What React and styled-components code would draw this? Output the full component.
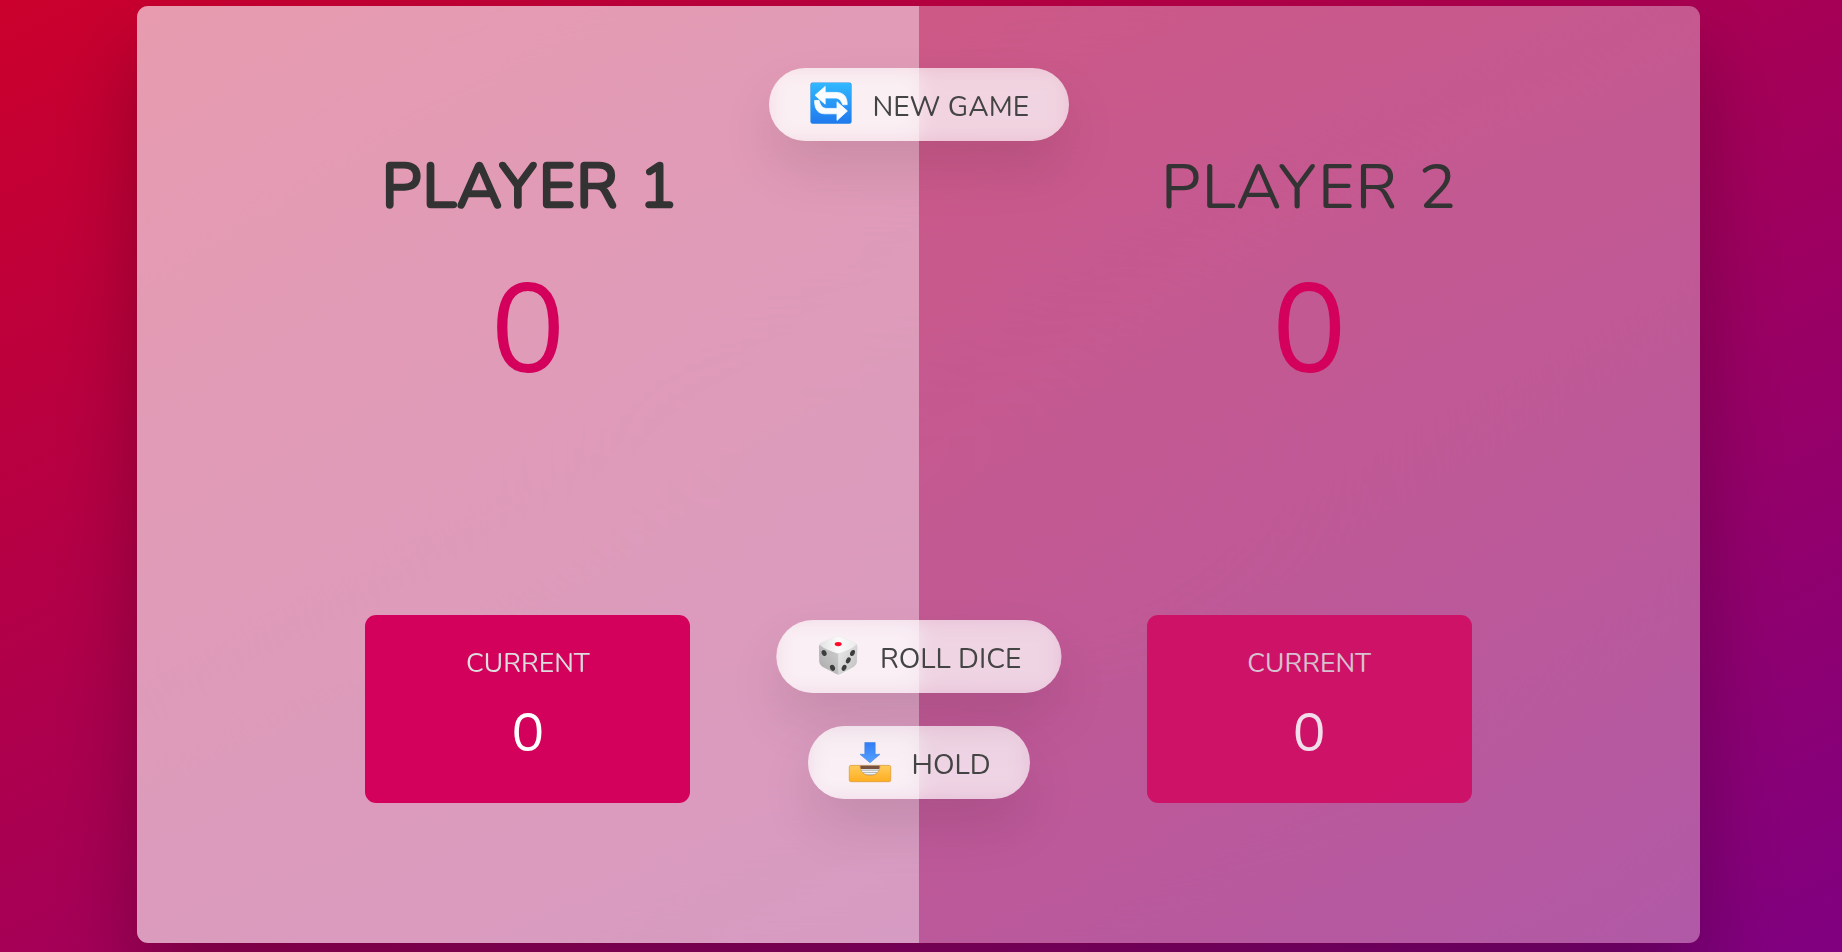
import React, { useState } from 'react';
import styled, { createGlobalStyle, css } from 'styled-components';

const GlobalStyle = createGlobalStyle`
  *, *::before, *::after { box-sizing: border-box; margin: 0; padding: 0; }
  html { font-size: 15.625px; }
  body {
    font-family: Nunito, Lato, sans-serif;
    font-weight: 400;
    height: 100vh;
    color: #333;
    background-image: linear-gradient(to top left, #800080 0%, #cb002c 100%);
    overflow: hidden;
  }
`;

const Page = styled.div`
  height: 949px;
  display: flex;
  align-items: center;
  justify-content: center;
  padding-right: 5px;
`;

const Board = styled.main`
  position: relative;
  width: 100rem;
  height: 60rem;
  display: flex;
  overflow: hidden;
  border-radius: 11.25px;
  background-color: rgba(255, 255, 255, 0.35);
  backdrop-filter: blur(300px);
  box-shadow: 0 3rem 5rem rgba(0, 0, 0, 0.25);
`;

const PlayerPanel = styled.section`
  flex: 50%;
  padding: 9rem;
  display: flex;
  flex-direction: column;
  align-items: center;
  ${({ $active }) => $active && css`background-color: rgba(255, 255, 255, 0.4);`}
`;

const Name = styled.h2`
  font-size: 4rem;
  line-height: 83px;
  font-weight: 400;
  letter-spacing: 1.25px;
  word-spacing: 2.5px;
  text-transform: uppercase;
  white-space: nowrap;
  margin-bottom: 1rem;
  ${({ $active }) => $active && css`
    -webkit-text-stroke: 2.6px #333;
    transform: translate(2px, -1.5px);
  `}
`;

const Score = styled.p`
  font-size: 8rem;
  line-height: 170px;
  color: #d3005c;
  margin-bottom: auto;
`;

const Current = styled.div`
  width: 65%;
  padding: 2rem;
  border-radius: 11.25px;
  background-color: #d3005c;
  color: #fff;
  text-align: center;
  opacity: ${({ $active }) => ($active ? 1 : 0.8)};
`;

const CurrentLabel = styled.p`
  font-size: 1.7rem;
  line-height: 34px;
  text-transform: uppercase;
  color: #ddd;
  margin-bottom: 1rem;
`;

const CurrentScore = styled.p`
  font-size: 3.5rem;
  line-height: 75.5px;
`;

const Button = styled.button`
  position: absolute;
  left: 50%;
  top: ${({ $top }) => $top}rem;
  width: ${({ $width }) => $width}px;
  height: 73px;
  transform: translateX(-50%);
  display: flex;
  align-items: center;
  gap: 19px;
  padding: 0 2.5rem;
  border: none;
  border-radius: 50rem;
  color: #444;
  font-family: inherit;
  font-size: 1.8rem;
  text-transform: uppercase;
  white-space: nowrap;
  cursor: pointer;
  background-color: rgba(255, 255, 255, 0.6);
  backdrop-filter: blur(10px);
  box-shadow: 0 1.75rem 3.5rem rgba(0, 0, 0, 0.1);
`;

const ButtonLabel = styled.span`
  padding-top: 5px;
`;

const Icon = styled.svg`
  width: 46px;
  height: 46px;
  flex: none;
`;

function RestartIcon() {
  return (
    <Icon viewBox="0 0 46 46">
      <defs>
        <linearGradient id="restart-bg" x1="0" y1="0" x2="0" y2="1">
          <stop offset="0" stopColor="#31b8ff" />
          <stop offset="1" stopColor="#2079ee" />
        </linearGradient>
      </defs>
      <rect x="2.4" y="0.6" width="41.2" height="41.2" rx="2.2" fill="#2a8fe0" />
      <rect x="2.9" y="1.1" width="40.2" height="40.2" rx="1.8" fill="url(#restart-bg)" />
      <g fill="#fafcff" stroke="#fafcff" strokeWidth="0.8" strokeLinejoin="round">
        <path d="M7 13.3 17.2 4.4V10.4H28C35.5 10.4 39.2 14.5 39.2 22.6L34.8 22.8C33.2 18.5 31 16 27 16H17.2V22.2Z" />
        <path d="M39.4 29 29 38.4V31.8H17C10 31.8 6.6 27.5 6.6 18.6L11 18.3C12.2 23.5 14.5 26.4 18.5 26.4H29V19.8Z" />
      </g>
    </Icon>
  );
}

function DiceIcon() {
  return (
    <Icon viewBox="-1.6 0.4 46 46">
      <defs>
        <linearGradient id="dice-top" x1="0" y1="0" x2="1" y2="0">
          <stop offset="0" stopColor="#e3e3e3" />
          <stop offset="0.5" stopColor="#fafafa" />
          <stop offset="1" stopColor="#ececec" />
        </linearGradient>
        <linearGradient id="dice-left" x1="0" y1="1" x2="1" y2="0">
          <stop offset="0" stopColor="#a9a9a9" />
          <stop offset="1" stopColor="#cfcfcf" />
        </linearGradient>
        <linearGradient id="dice-right" x1="0" y1="0" x2="1" y2="1">
          <stop offset="0" stopColor="#eeeeee" />
          <stop offset="1" stopColor="#bcbcbc" />
        </linearGradient>
      </defs>
      <path d="M18.5 4.1Q21 3 23.5 4.1L37.4 9.8Q40.3 11.2 40.2 14.2L39.8 29Q39.6 32.2 37 33.9L23.8 41.2Q21.3 42.5 18.8 41.2L5 33.8Q2.4 32.3 2.2 29.2L1.8 14.2Q1.8 11.2 4.6 9.8Z" fill="#d6d6d6" />
      <path d="M3 11.8Q3.4 10.5 5 9.7L18.5 4.1Q21 3 23.5 4.1L37.2 9.7Q38.6 10.4 39.2 11.8Q37 14.5 31 17.5Q24 20.8 21.2 20.8T11 17.5Q5 14.5 3 11.8Z" fill="url(#dice-top)" />
      <path d="M2.6 12.3Q5 14.6 11 17.5Q18 20.4 20 20.8Q21.2 21.5 21.2 24V42Q20 42 18.8 41.2L5 33.8Q2.4 32.3 2.2 29.2L1.8 14.2Q1.9 13 2.6 12.3Z" fill="url(#dice-left)" />
      <path d="M39.4 12.3Q37 14.6 31 17.5Q24 20.4 22.4 20.8Q21.2 21.5 21.2 24V42Q22.4 42 23.8 41.2L37 33.9Q39.6 32.2 39.8 29L40.2 14.2Q40.1 13 39.4 12.3Z" fill="url(#dice-right)" />
      <ellipse cx="21.1" cy="11.5" rx="3.5" ry="2.1" fill="#ff0a28" />
      <g fill="#3d3d3d">
        <ellipse cx="7" cy="20.4" rx="2.4" ry="3.1" transform="rotate(-24 7 20.4)" />
        <ellipse cx="15.4" cy="35.2" rx="2.4" ry="3.1" transform="rotate(-24 15.4 35.2)" />
        <ellipse cx="35.4" cy="20.4" rx="2.2" ry="3.2" transform="rotate(26 35.4 20.4)" />
        <ellipse cx="31.2" cy="27.8" rx="2.2" ry="3.2" transform="rotate(26 31.2 27.8)" />
        <ellipse cx="27" cy="35.2" rx="2.2" ry="3.2" transform="rotate(26 27 35.2)" />
      </g>
    </Icon>
  );
}

function InboxIcon() {
  return (
    <Icon viewBox="0 -1.1 46 46">
      <defs>
        <linearGradient id="inbox-arrow" x1="0" y1="0" x2="0" y2="1">
          <stop offset="0" stopColor="#327cf5" />
          <stop offset="1" stopColor="#55a2ff" />
        </linearGradient>
        <linearGradient id="inbox-tray" x1="0" y1="0" x2="0" y2="1">
          <stop offset="0" stopColor="#ffcb59" />
          <stop offset="1" stopColor="#ffad20" />
        </linearGradient>
        <clipPath id="inbox-slot">
          <path d="M13 24.5H33C33 30.5 29 34.4 23 34.4S13 30.5 13 24.5Z" />
        </clipPath>
      </defs>
      <path d="M17.8 1.4H28.2V13.2H33L23 21.6 13 13.2H17.8Z" fill="url(#inbox-arrow)" stroke="#3c82e2" strokeWidth="0.6" />
      <rect x="2.3" y="24.3" width="41.4" height="16.3" rx="1.6" fill="url(#inbox-tray)" stroke="#dd9c35" strokeWidth="0.8" />
      <g clipPath="url(#inbox-slot)">
        <rect x="12" y="24" width="22" height="11" fill="#f1f3f3" />
        <rect x="12" y="24" width="22" height="4" fill="#79513f" />
        <path d="M12 29.2H34M12 31.4H34M12 33.6H34" stroke="#a3abad" strokeWidth="0.8" />
      </g>
      <path d="M13 24.5C13 30.5 17 34.4 23 34.4S33 30.5 33 24.5" fill="none" stroke="#d59a43" strokeWidth="0.8" />
    </Icon>
  );
}

function Player({ name, active, score, current }) {
  return (
    <PlayerPanel $active={active}>
      <Name $active={active}>{name}</Name>
      <Score>{score}</Score>
      <Current $active={active}>
        <CurrentLabel>Current</CurrentLabel>
        <CurrentScore>{current}</CurrentScore>
      </Current>
    </PlayerPanel>
  );
}

export default function App() {
  const [active] = useState(0);
  return (
    <>
      <GlobalStyle />
      <Page>
        <Board>
          <Player name="Player 1" active={active === 0} score={0} current={0} />
          <Player name="Player 2" active={active === 1} score={0} current={0} />
          <Button $top={4} $width={300}><RestartIcon /><ButtonLabel>New game</ButtonLabel></Button>
          <Button $top={39.3} $width={285}><DiceIcon /><ButtonLabel>Roll dice</ButtonLabel></Button>
          <Button $top={46.1} $width={222}><InboxIcon /><ButtonLabel>Hold</ButtonLabel></Button>
        </Board>
      </Page>
    </>
  );
}
